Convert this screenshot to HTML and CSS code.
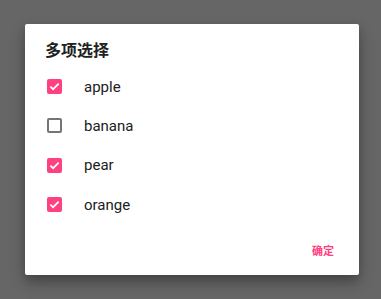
FILE: index.html
```html
<!DOCTYPE html>
<html>
<head>
<meta charset="utf-8">
<link rel="stylesheet" href="styles.css">
</head>
<body>
<div class="dialog">
  <div class="title">多项选择</div>
  <div class="list">
    <div class="row"><span class="box on"><svg viewBox="0 0 15 15" width="15" height="15"><path d="M3.4 7.6 L6.1 10.2 L11.7 4.6" fill="none" stroke="#fff" stroke-width="1.7"/></svg></span><span class="label">apple</span></div>
    <div class="row"><span class="box"></span><span class="label">banana</span></div>
    <div class="row"><span class="box on"><svg viewBox="0 0 15 15" width="15" height="15"><path d="M3.4 7.6 L6.1 10.2 L11.7 4.6" fill="none" stroke="#fff" stroke-width="1.7"/></svg></span><span class="label">pear</span></div>
    <div class="row"><span class="box on"><svg viewBox="0 0 15 15" width="15" height="15"><path d="M3.4 7.6 L6.1 10.2 L11.7 4.6" fill="none" stroke="#fff" stroke-width="1.7"/></svg></span><span class="label">orange</span></div>
  </div>
  <div class="actions"><span class="btn">确定</span></div>
</div>
</body>
</html>
```
FILE: styles.css
```css
html, body {
  margin: 0;
  padding: 0;
  background: #666666;
  width: 381px;
  height: 299px;
  overflow: hidden;
}
body {
  padding: 24px 0 0 25px;
  box-sizing: border-box;
  font-family: Roboto, "Noto Sans CJK SC", sans-serif;
}
.dialog {
  width: 334px;
  height: 251px;
  background: #fff;
  border-radius: 2px;
  box-shadow: 0 8px 16px rgba(0,0,0,0.25), 0 4px 8px rgba(0,0,0,0.15);
  box-sizing: border-box;
  padding: 14px 0 0 0;
  display: flex;
  flex-direction: column;
}
.title {
  font-family: "Noto Sans CJK SC", sans-serif;
  font-weight: bold;
  font-size: 16px;
  line-height: 22px;
  color: #212121;
  padding-left: 20px;
}
.list {
  display: flex;
  flex-direction: column;
  margin-top: 7px;
}
.row {
  height: 39.3px;
  display: flex;
  align-items: center;
  padding-left: 22px;
}
.box {
  width: 15px;
  height: 15px;
  box-sizing: border-box;
  border: 2px solid #757575;
  border-radius: 2px;
  display: flex;
  align-items: center;
  justify-content: center;
}
.box.on {
  border: none;
  background: #ff4081;
}
.label {
  margin-left: 22px;
  font-size: 15px;
  color: #212121;
}
.actions {
  display: flex;
  justify-content: flex-end;
  padding-right: 25px;
  margin-top: 19px;
}
.btn {
  font-family: "Noto Sans CJK SC", sans-serif;
  font-weight: bold;
  font-size: 11px;
  line-height: 14px;
  color: #ff4081;
}
```
